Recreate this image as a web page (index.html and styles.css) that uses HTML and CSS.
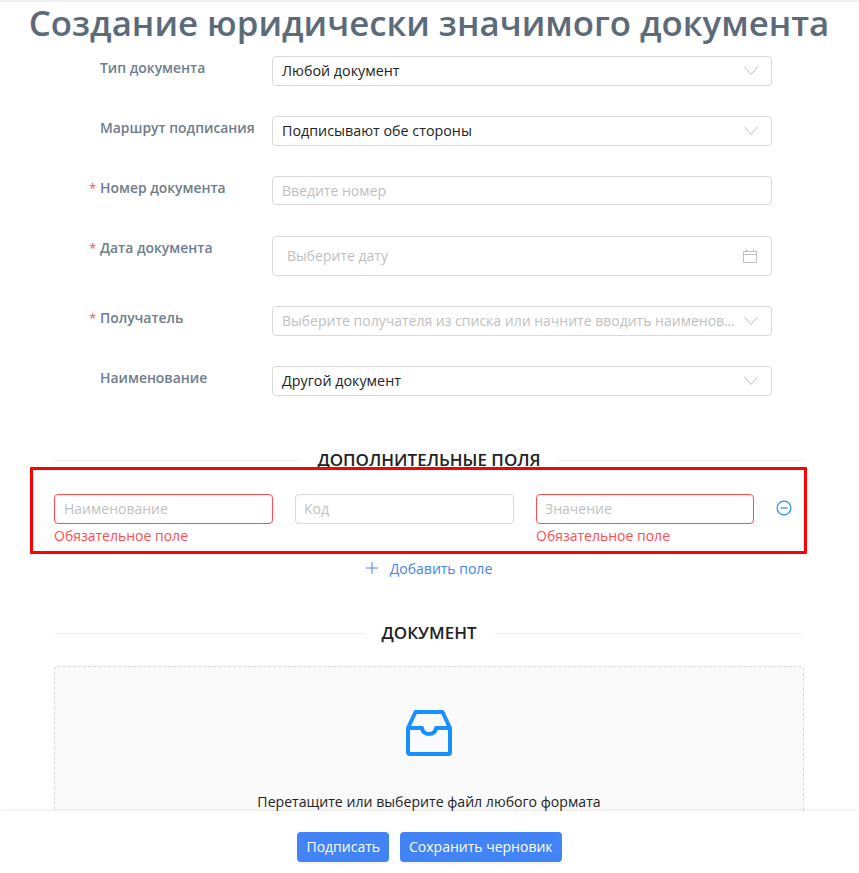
FILE: index.html
```html
<!DOCTYPE html>
<html lang="ru">
<head>
<meta charset="utf-8">
<title>Создание юридически значимого документа</title>
<link rel="stylesheet" href="styles.css">
</head>
<body>
<main class="page">
  <h1 class="title">Создание юридически значимого документа</h1>
  <form class="form">
    <div class="row">
      <label class="label">Тип документа</label>
      <div class="control select"><span class="value">Любой документ</span><svg class="chev" viewBox="0 0 14 10"><path d="M.5.8L7 8.500 13.500.8"/></svg></div>
    </div>
    <div class="row">
      <label class="label">Маршрут подписания</label>
      <div class="control select"><span class="value">Подписывают обе стороны</span><svg class="chev" viewBox="0 0 14 10"><path d="M.5.8L7 8.500 13.500.8"/></svg></div>
    </div>
    <div class="row row-short">
      <label class="label req">Номер документа</label>
      <div class="control short"><span class="ph">Введите номер</span></div>
    </div>
    <div class="row">
      <label class="label req">Дата документа</label>
      <div class="control tall"><span class="ph">Выберите дату</span><svg class="cal" viewBox="0 0 14 14"><path d="M.5 2.500h13v11H.5zM.5 5.500h13M3.500 0v2.500M10.500 0v2.500"/></svg></div>
    </div>
    <div class="row">
      <label class="label req">Получатель</label>
      <div class="control select"><span class="ph">Выберите получателя из списка или начните вводить наименов…</span><svg class="chev" viewBox="0 0 14 10"><path d="M.5.8L7 8.500 13.500.8"/></svg></div>
    </div>
    <div class="row">
      <label class="label">Наименование</label>
      <div class="control select"><span class="value">Другой документ</span><svg class="chev" viewBox="0 0 14 10"><path d="M.5.8L7 8.500 13.500.8"/></svg></div>
    </div>
  </form>

  <div class="divider first"><span>ДОПОЛНИТЕЛЬНЫЕ ПОЛЯ</span></div>
  <div class="extra">
    <div class="field"><div class="control error"><span class="ph">Наименование</span></div><div class="err">Обязательное поле</div></div>
    <div class="field"><div class="control tight"><span class="ph">Код</span></div></div>
    <div class="field"><div class="control error tight"><span class="ph">Значение</span></div><div class="err">Обязательное поле</div></div>
    <svg class="minus" viewBox="0 0 16 16"><circle cx="8" cy="8" r="6.900"/><path d="M4.500 8h7"/></svg>
  </div>
  <div class="add"><svg class="plus" viewBox="0 0 12 12"><path d="M6 0v12M0 6h12"/></svg><span>Добавить поле</span></div>

  <div class="divider second"><span>ДОКУМЕНТ</span></div>
  <div class="drop">
    <svg class="inbox" viewBox="0 0 46 46"><path d="M9.500 2h27l7.500 16v24.500c0 .8-.7 1.500-1.500 1.500h-39c-.8 0-1.500-.7-1.500-1.500V18zM2 18h14c.3 3.800 3.300 6 7 6s6.700-2.200 7-6h14"/></svg>
    <p class="drop-text">Перетащите или выберите файл любого формата</p>
  </div>
</main>
<div class="highlight"></div>
<footer class="footer">
  <button class="btn" type="button">Подписать</button>
  <button class="btn" type="button">Сохранить черновик</button>
</footer>
</body>
</html>
```
FILE: styles.css
```css
* { box-sizing: border-box; }
html, body { margin: 0; height: 100%; overflow: hidden; background: #fff; }
body { font-family: "Open Sans", "Noto Sans", sans-serif; font-size: 14px; color: #222; }
.page { border-top: 2px solid #f0f0f0; padding: 0 55px 0 54px; height: 873px; overflow: hidden; }
.title { margin: 0 -40px; height: 54px; font-size: 34.8px; line-height: 42px; font-weight: 600; color: #5c6b7a; text-align: center; white-space: nowrap; }
.form { display: flex; flex-direction: column; }
.row { display: grid; grid-template-columns: 218px 500px; align-items: start; margin-bottom: 30px; }
.row-short { margin-bottom: 31px; }
.label { padding: 1px 0 0 46px; font-weight: 600; font-size: 13.9px; line-height: 22px; color: #6e7d8b; position: relative; white-space: nowrap; }
.label.req::before { content: "*"; position: absolute; left: 35px; color: #ff4d4f; font-weight: 400; font-size: 13px; }
.control { height: 30px; border: 1px solid #d9d9d9; border-radius: 4px; padding: 0 9px; display: flex; align-items: center; justify-content: space-between; font-size: 14px; line-height: 22px; background: #fff; }
.control.short { height: 29px; }
.control.tall { height: 40px; padding: 0 14px; }
.control.tight { padding-left: 8px; }
.value { font-size: 14.3px; }
.ph { color: #bfbfbf; white-space: nowrap; }
.chev { width: 14px; height: 10px; fill: none; stroke: #bfbfbf; stroke-width: 1; flex: none; margin-right: 4px; }
.cal { width: 14px; height: 14px; fill: none; stroke: #bfbfbf; stroke-width: 1; flex: none; }
.divider { display: flex; align-items: center; gap: 17px; font-size: 17px; font-weight: 600; color: #222; line-height: 22px; white-space: nowrap; }
.divider::before, .divider::after { content: ""; flex: 1; height: 1px; background: #f0f0f0; }
.divider.first { margin-top: 23px; }
.divider.second { margin-top: 43px; }
.extra { display: grid; grid-template-columns: 219px 219px 218px 20px; column-gap: 22px; align-items: start; margin-top: 23px; height: 62px; }
.field { display: flex; flex-direction: column; }
.control.error { border-color: #ff4d4f; }
.err { color: #ff4d4f; font-size: 14px; line-height: 22px; margin-top: 1px; }
.minus { width: 16px; height: 16px; margin-top: 6px; fill: none; stroke: #1890ff; stroke-width: 1.200; }
.add { display: flex; justify-content: center; align-items: center; gap: 12px; color: #4284f5; height: 22px; margin-top: 1px; }
.plus { width: 12px; height: 12px; fill: none; stroke: #4284f5; stroke-width: 1; }
.drop { margin-top: 22px; height: 220px; border: 1px dashed #d9d9d9; border-radius: 4px; background: #fafafa; display: flex; flex-direction: column; align-items: center; padding-top: 43px; }
.inbox { width: 46px; height: 46px; margin-right: 1px; fill: none; stroke: #1890ff; stroke-width: 4; stroke-linejoin: round; flex: none; }
.drop-text { margin: 35px 0 0; font-size: 14.12px; line-height: 22px; color: #222; }
.highlight { position: absolute; left: 30px; top: 467px; width: 777px; height: 87px; border: 3px solid #f00; border-radius: 1px; pointer-events: none; }
.footer { position: absolute; left: 0; right: 0; bottom: 0; height: 62px; padding-top: 10px; background: #fff; box-shadow: 0 -1px 3px rgba(0,0,0,.08); display: flex; justify-content: center; align-items: center; gap: 11px; }
.btn { height: 30px; border: 0; border-radius: 4px; background: #4284f5; color: #fff; font: 14px/22px "Open Sans", "Noto Sans", sans-serif; padding: 0 9px; box-shadow: 0 2px 2px rgba(0,0,0,.05); }
```
